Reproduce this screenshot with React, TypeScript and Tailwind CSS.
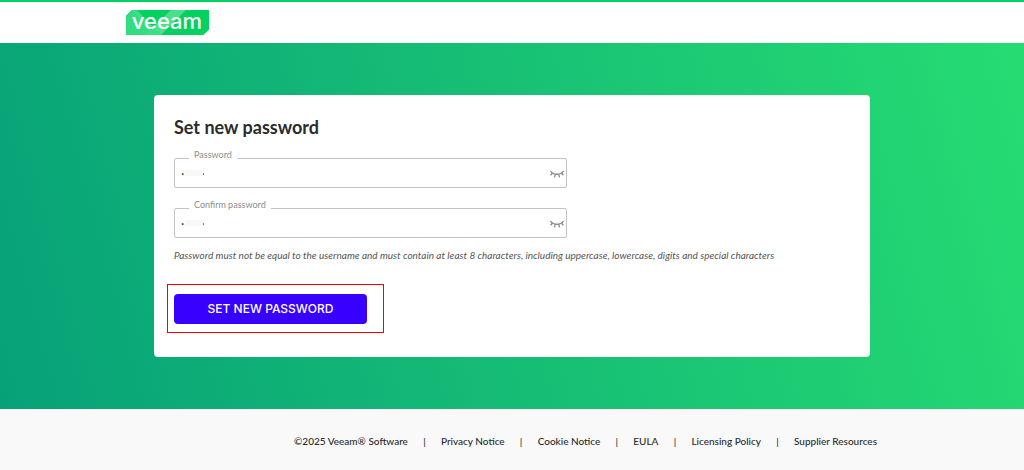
import { useState } from "react";

const footerLinks = ["Privacy Notice", "Cookie Notice", "EULA", "Licensing Policy", "Supplier Resources"];

function Logo() {
  return (
    <svg viewBox="0 0 83 25" className="block h-[25px] w-[83px] overflow-visible" role="img" aria-label="Veeam">
      <defs>
        <clipPath id="logo-shape">
          <path d="M6 0H83V19.500L77.500 25H0V6Z" />
        </clipPath>
      </defs>
      <g clipPath="url(#logo-shape)">
        <rect width="83" height="25" fill="#00d15f" />
        <path d="M0 0H11L35 25H0Z" fill="#3ddf85" />
        <path d="M0 0H5L24 19L19 25H0Z" fill="#32dc7f" />
        <path d="M35 25L60 0H45L27 17Z" fill="#4ce08d" />
      </g>
      <text
        x="41"
        y="19"
        textAnchor="middle"
        fill="#fff"
        className="font-['Inter',sans-serif] text-[22px] font-medium"
      >
        veeam
      </text>
    </svg>
  );
}

function ClosedEye() {
  return (
    <svg viewBox="0 0 14 8" className="h-2 w-[14px]" fill="none" stroke="#8b8b8b" strokeWidth="1.3">
      <path d="M0.500 1C3.500 5.300 10.500 5.300 13.500 1" />
      <path d="M2.600 3L0.600 5.300M5.300 4.300L4.500 7.300M8.700 4.300L9.500 7.300M11.400 3L13.400 5.300" />
    </svg>
  );
}

function PasswordField({ id, label }: { id: string; label: string }) {
  const [visible, setVisible] = useState(false);
  const [value, setValue] = useState("secret1");

  return (
    <fieldset className="w-full max-w-[393px] rounded-xs border border-[#c1c1c6]">
      <legend className="ml-[14px] h-4 px-[5px] text-[9px] text-[#8d8d8d]">
        <label htmlFor={id} className="block leading-[10px]">
          {label}
        </label>
      </legend>
      <div className="relative flex h-[21px] items-start pr-[2px]">
        <input
          id={id}
          type={visible ? "text" : "password"}
          value={value}
          onChange={(e) => setValue(e.target.value)}
          className="h-[14px] min-w-0 flex-1 pl-[6px] font-['Inter',sans-serif] text-[6px] text-[#222] outline-none"
        />
        <span className="pointer-events-none absolute left-[10px] top-1 h-[6px] w-[18px] bg-[#f8f8f8]" />
        <button
          type="button"
          aria-label="Toggle visibility"
          className="flex h-4 items-center"
          onClick={() => setVisible(!visible)}
        >
          <ClosedEye />
        </button>
      </div>
    </fieldset>
  );
}

export default function App() {
  return (
    <div className="flex min-h-screen flex-col bg-[#f9f9f9] font-['Lato',sans-serif] text-[#2b2b2b]">
      <header className="border-t-2 border-[#00d15f] bg-white">
        <div className="mx-auto w-full max-w-[772px] pb-2 pt-2">
          <a href="#" className="block w-fit">
            <Logo />
          </a>
        </div>
      </header>

      <main className="bg-[linear-gradient(75deg,#07a178,#26dc72)] py-[52px]">
        <form
          onSubmit={(e) => e.preventDefault()}
          className="mx-auto w-full max-w-[716px] rounded bg-white px-5 pb-[33px] pt-5"
        >
          <h1 className="text-[18px] font-bold leading-6">Set new password</h1>
          <div className="mt-[11px] flex flex-col gap-3">
            <PasswordField id="password" label="Password" />
            <PasswordField id="confirm-password" label="Confirm password" />
          </div>
          <p className="mt-[9px] text-[10px] italic leading-4 text-[#555]">
            Password must not be equal to the username and must contain at least 8 characters, including uppercase,
            lowercase, digits and special characters
          </p>
          <div className="relative mt-[31px] w-fit">
            <button
              type="submit"
              className="block h-[30px] w-[193px] rounded bg-[#3700ff] font-['Inter',sans-serif] text-xs font-medium text-white"
            >
              SET NEW PASSWORD
            </button>
            <span className="pointer-events-none absolute -bottom-[9px] -left-[7px] -right-[17px] -top-[10px] border border-[#f50000]" />
          </div>
        </form>
      </main>

      <footer className="mx-auto flex w-full max-w-[730px] justify-end py-6 text-[10px] font-medium leading-4">
        <span>©2025 Veeam® Software</span>
        {footerLinks.map((link) => (
          <span key={link} className="flex">
            <span className="w-[33px] text-center">|</span>
            <a href="#">{link}</a>
          </span>
        ))}
      </footer>
    </div>
  );
}
